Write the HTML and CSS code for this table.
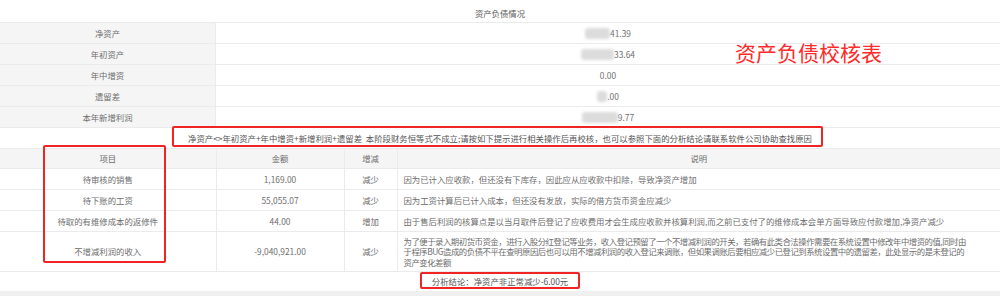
FILE: index.html
```html
<!DOCTYPE html>
<html lang="zh">
<head>
<meta charset="utf-8">
<title>资产负债情况</title>
<link rel="stylesheet" href="styles.css">
</head>
<body>
<div class="panel">
  <div class="title">资产负债情况</div>
  <table class="info">
    <tr><td class="label">净资产</td><td class="val"><span class="mask m1"></span>41.39</td></tr>
    <tr><td class="label">年初资产</td><td class="val"><span class="mask m2"></span>33.64</td></tr>
    <tr><td class="label">年中增资</td><td class="val">0.00</td></tr>
    <tr><td class="label">遗留差</td><td class="val"><span class="mask m3"></span>.00</td></tr>
    <tr><td class="label">本年新增利润</td><td class="val"><span class="mask m4"></span>9.77</td></tr>
  </table>
  <div class="formula">净资产&lt;&gt;年初资产+年中增资+新增利润+遗留差&nbsp; 本阶段财务恒等式不成立;请按如下提示进行相关操作后再校核，也可以参照下面的分析结论请联系软件公司协助查找原因</div>
  <table class="detail">
    <colgroup><col class="c1"><col class="c2"><col class="c3"><col></colgroup>
    <tr class="head"><th>项目</th><th>金额</th><th>增减</th><th>说明</th></tr>
    <tr><td>待审核的销售</td><td>1,169.00</td><td>减少</td><td class="desc">因为已计入应收款，但还没有下库存，因此应从应收款中扣除，导致净资产增加</td></tr>
    <tr><td>待下账的工资</td><td>55,055.07</td><td>减少</td><td class="desc">因为工资计算后已计入成本，但还没有发放，实际的借方货币资金应减少</td></tr>
    <tr><td>待取的有维修成本的返修件</td><td>44.00</td><td>增加</td><td class="desc">由于售后利润的核算点是以当月取件后登记了应收费用才会生成应收款并核算利润,而之前已支付了的维修成本会单方面导致应付款增加,净资产减少</td></tr>
    <tr class="tall"><td>不增减利润的收入</td><td>-9,040,921.00</td><td>减少</td><td class="desc">为了便于录入期初货币资金，进行入股分红登记等业务，收入登记预留了一个不增减利润的开关，若确有此类合法操作需要在系统设置中修改年中增资的值,同时由<br>于程序BUG造成的负债不平在查明原因后也可以用不增减利润的收入登记来调账，但如果调账后要相应减少已登记到系统设置中的遗留差，此处显示的是未登记的<br>资产变化差额</td></tr>
  </table>
  <div class="conclusion">分析结论：净资产非正常减少-6.00元</div>

  <div class="note">资产负债校核表</div>
  <div class="mark mark-formula"></div>
  <div class="mark mark-items"></div>
  <div class="mark mark-result"></div>
</div>
</body>
</html>
```
FILE: styles.css
```css
html, body {
  margin: 0;
  padding: 0;
}
body {
  background: #f0f0f0;
  width: 1000px;
  height: 296px;
  overflow: hidden;
  font-family: "Noto Sans CJK SC", "Microsoft YaHei", sans-serif;
  font-size: 8.4px;
  color: #6e6e6e;
}
.panel {
  position: relative;
  background: #fff;
  height: 291px;
}
.title {
  height: 22px;
  line-height: 27px;
  text-align: center;
  color: #5a5a5a;
}
table {
  width: 100%;
  border-collapse: collapse;
  table-layout: fixed;
}
td, th {
  padding: 0;
  border: 1px solid #ebebeb;
  font-weight: normal;
  text-align: center;
}
tr > :first-child { border-left: none; }
tr > :last-child { border-right: none; }
.info td {
  height: 20px;
  line-height: 20px;
}
.info .label {
  width: 215px;
  background: #f5f5f5;
}
.mask {
  display: inline-block;
  height: 11px;
  vertical-align: -2px;
  background: #dcdcdc;
  filter: blur(1.5px);
  border-radius: 3px;
}
.m1 { width: 25px; }
.m2 { width: 33px; }
.m3 { width: 10px; }
.m4 { width: 36px; }
.formula {
  height: 20px;
  line-height: 20px;
  text-align: center;
  color: #555;
  border-bottom: 1px solid #ebebeb;
}
.detail .c1 { width: 216px; }
.detail .c2 { width: 128px; }
.detail .c3 { width: 53px; }
.detail th {
  height: 19px;
  line-height: 19px;
  background: #f5f5f5;
  border-top: none;
}
.detail td {
  height: 20px;
  line-height: 10.5px;
}
.detail td.desc {
  text-align: left;
  padding-left: 6px;
  white-space: nowrap;
  overflow: hidden;
}
.detail .tall td {
  height: 39px;
}
.detail .tall td.desc {
  letter-spacing: -0.48px;
}
.conclusion {
  height: 20px;
  line-height: 19px;
  text-align: center;
  color: #555;
}
.note {
  position: absolute;
  left: 735px;
  top: 39px;
  font-size: 21px;
  line-height: 26px;
  color: #ff2b2b;
}
.mark {
  position: absolute;
  border: 2px solid #f02424;
  border-radius: 2px;
}
.mark-formula { left: 172px; top: 126px; width: 647px; height: 17px; }
.mark-items { left: 43px; top: 145px; width: 119px; height: 114px; }
.mark-result { left: 420px; top: 272px; width: 156px; height: 13px; }
```
